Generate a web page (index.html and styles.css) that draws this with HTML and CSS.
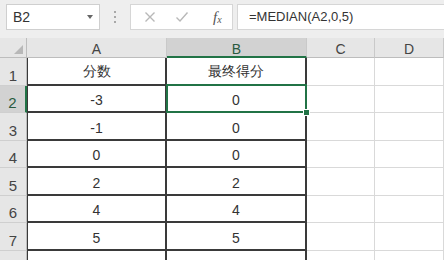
FILE: index.html
```
<!DOCTYPE html>
<html>
<head>
<meta name="viewport" content="width=device-width, initial-scale=1">
<link rel="stylesheet" href="styles.css">
</head>
<body>

<div class="toolbar">
  <div class="namebox">
    <span>B2</span>
    <span class="caret"></span>
  </div>
  <div class="grip"><i></i><i></i><i></i></div>
  <div class="fbuttons">
    <svg width="12" height="12" viewBox="0 0 12 12"><path d="M1.5 1.5 L10.5 10.5 M10.5 1.5 L1.5 10.5" stroke="#b8b8b8" stroke-width="1.4" fill="none"/></svg>
    <svg width="14" height="12" viewBox="0 0 14 12"><path d="M1.5 6.5 L5 10 L12.5 1.5" stroke="#b8b8b8" stroke-width="1.4" fill="none"/></svg>
    <span class="fx">f<sub>x</sub></span>
  </div>
  <div class="formula">=MEDIAN(A2,0,5)</div>
</div>

<div class="sheet">
  <div class="corner"><span class="tri"></span></div>
  <div class="colhead">A</div>
  <div class="colhead sel">B</div>
  <div class="colhead">C</div>
  <div class="colhead">D</div>

  <div class="rowhead">1</div>
  <div class="cell t ta">分数</div>
  <div class="cell t">最终得分</div>
  <div class="cell"></div>
  <div class="cell"></div>

  <div class="rowhead sel">2</div>
  <div class="cell t ta">-3</div>
  <div class="cell t active">0<span class="handle"></span></div>
  <div class="cell"></div>
  <div class="cell"></div>

  <div class="rowhead">3</div>
  <div class="cell t ta">-1</div>
  <div class="cell t">0</div>
  <div class="cell"></div>
  <div class="cell"></div>

  <div class="rowhead">4</div>
  <div class="cell t ta">0</div>
  <div class="cell t">0</div>
  <div class="cell"></div>
  <div class="cell"></div>

  <div class="rowhead">5</div>
  <div class="cell t ta">2</div>
  <div class="cell t">2</div>
  <div class="cell"></div>
  <div class="cell"></div>

  <div class="rowhead">6</div>
  <div class="cell t ta">4</div>
  <div class="cell t">4</div>
  <div class="cell"></div>
  <div class="cell"></div>

  <div class="rowhead">7</div>
  <div class="cell t ta">5</div>
  <div class="cell t">5</div>
  <div class="cell"></div>
  <div class="cell"></div>

  <div class="rowhead"></div>
  <div class="cell t ta"></div>
  <div class="cell t"></div>
  <div class="cell"></div>
  <div class="cell"></div>
</div>

</body>
</html>
```

FILE: styles.css
```
body {
  margin: 0;
  width: 444px;
  height: 260px;
  overflow: hidden;
  background: #eeeeee;
  font-family: "Liberation Sans", Arial, sans-serif;
  color: #222;
}

.toolbar {
  display: flex;
  height: 38px;
  box-sizing: border-box;
  padding: 4px 0 0 6px;
}

.namebox {
  width: 94px;
  height: 26px;
  box-sizing: border-box;
  background: #fff;
  border: 1px solid #cfcfcf;
  display: flex;
  align-items: center;
  justify-content: space-between;
  padding: 0 6px 0 6px;
  font-size: 14px;
  color: #333;
}

.caret {
  width: 0;
  height: 0;
  border-left: 3px solid transparent;
  border-right: 3px solid transparent;
  border-top: 4px solid #666;
}

.grip {
  width: 30px;
  display: flex;
  flex-direction: column;
  align-items: center;
  justify-content: center;
  gap: 3px;
  height: 26px;
}

.grip i {
  width: 2px;
  height: 2px;
  background: #a8a8a8;
}

.fbuttons {
  width: 103px;
  height: 26px;
  box-sizing: border-box;
  background: #fff;
  border: 1px solid #d6d6d6;
  display: flex;
  align-items: center;
  padding-left: 13px;
  gap: 19px;
}

.fx {
  font-family: "Liberation Serif", serif;
  font-style: italic;
  font-size: 15px;
  color: #555;
  margin-left: 5px;
}

.fx sub {
  font-size: 10px;
  vertical-align: -1px;
}

.formula {
  flex: 1;
  margin-left: 4px;
  height: 26px;
  box-sizing: border-box;
  background: #fff;
  border: 1px solid #d6d6d6;
  border-right: none;
  padding-left: 11px;
  font-size: 13px;
  line-height: 24px;
  color: #333;
}

.sheet {
  display: grid;
  grid-template-columns: 27px 140px 140px 68px 1fr;
  grid-template-rows: 20px repeat(8, 27.5px);
  background: #fff;
}

.sheet > div {
  box-sizing: border-box;
}

.corner {
  background: #e6e6e6;
  border-right: 1px solid #bdbdbd;
  border-bottom: 1px solid #bdbdbd;
  position: relative;
}

.tri {
  position: absolute;
  right: 3px;
  bottom: 3px;
  width: 0;
  height: 0;
  border-left: 9px solid transparent;
  border-bottom: 9px solid #b8b8b8;
}

.colhead {
  background: #e6e6e6;
  border-right: 1px solid #c9c9c9;
  border-bottom: 1px solid #bdbdbd;
  text-align: center;
  font-size: 14px;
  line-height: 20px;
  padding-top: 1px;
  color: #444;
}

.colhead.sel {
  background: #d2d2d2;
  border-bottom: 2px solid #217346;
  color: #2a5a40;
}

.rowhead {
  background: #e6e6e6;
  border-right: 1px solid #bdbdbd;
  border-bottom: 1px solid #cfcfcf;
  text-align: center;
  font-size: 15px;
  display: flex;
  align-items: flex-end;
  justify-content: center;
  padding-bottom: 1px;
  color: #444;
}

.rowhead.sel {
  background: #d2d2d2;
  border-right: 2px solid #217346;
  color: #2a5a40;
}

.cell {
  border-right: 1px solid #d9d9d9;
  border-bottom: 1px solid #d9d9d9;
  display: flex;
  align-items: flex-end;
  justify-content: center;
  font-size: 14px;
  padding-bottom: 3px;
  color: #333;
}

.cell.t {
  border-right: 2px solid #3a3a3a;
  border-bottom: 2px solid #3a3a3a;
}

.cell.ta {
  border-left: 1px solid #3a3a3a;
}

.active {
  position: relative;
}

.active::after {
  content: "";
  position: absolute;
  top: -2px;
  left: -1px;
  right: -2px;
  bottom: -2px;
  border: 2px solid #217346;
}

.handle {
  position: absolute;
  right: -5px;
  bottom: -5px;
  width: 5px;
  height: 5px;
  background: #217346;
  border: 1px solid #fff;
  z-index: 1;
}
```
